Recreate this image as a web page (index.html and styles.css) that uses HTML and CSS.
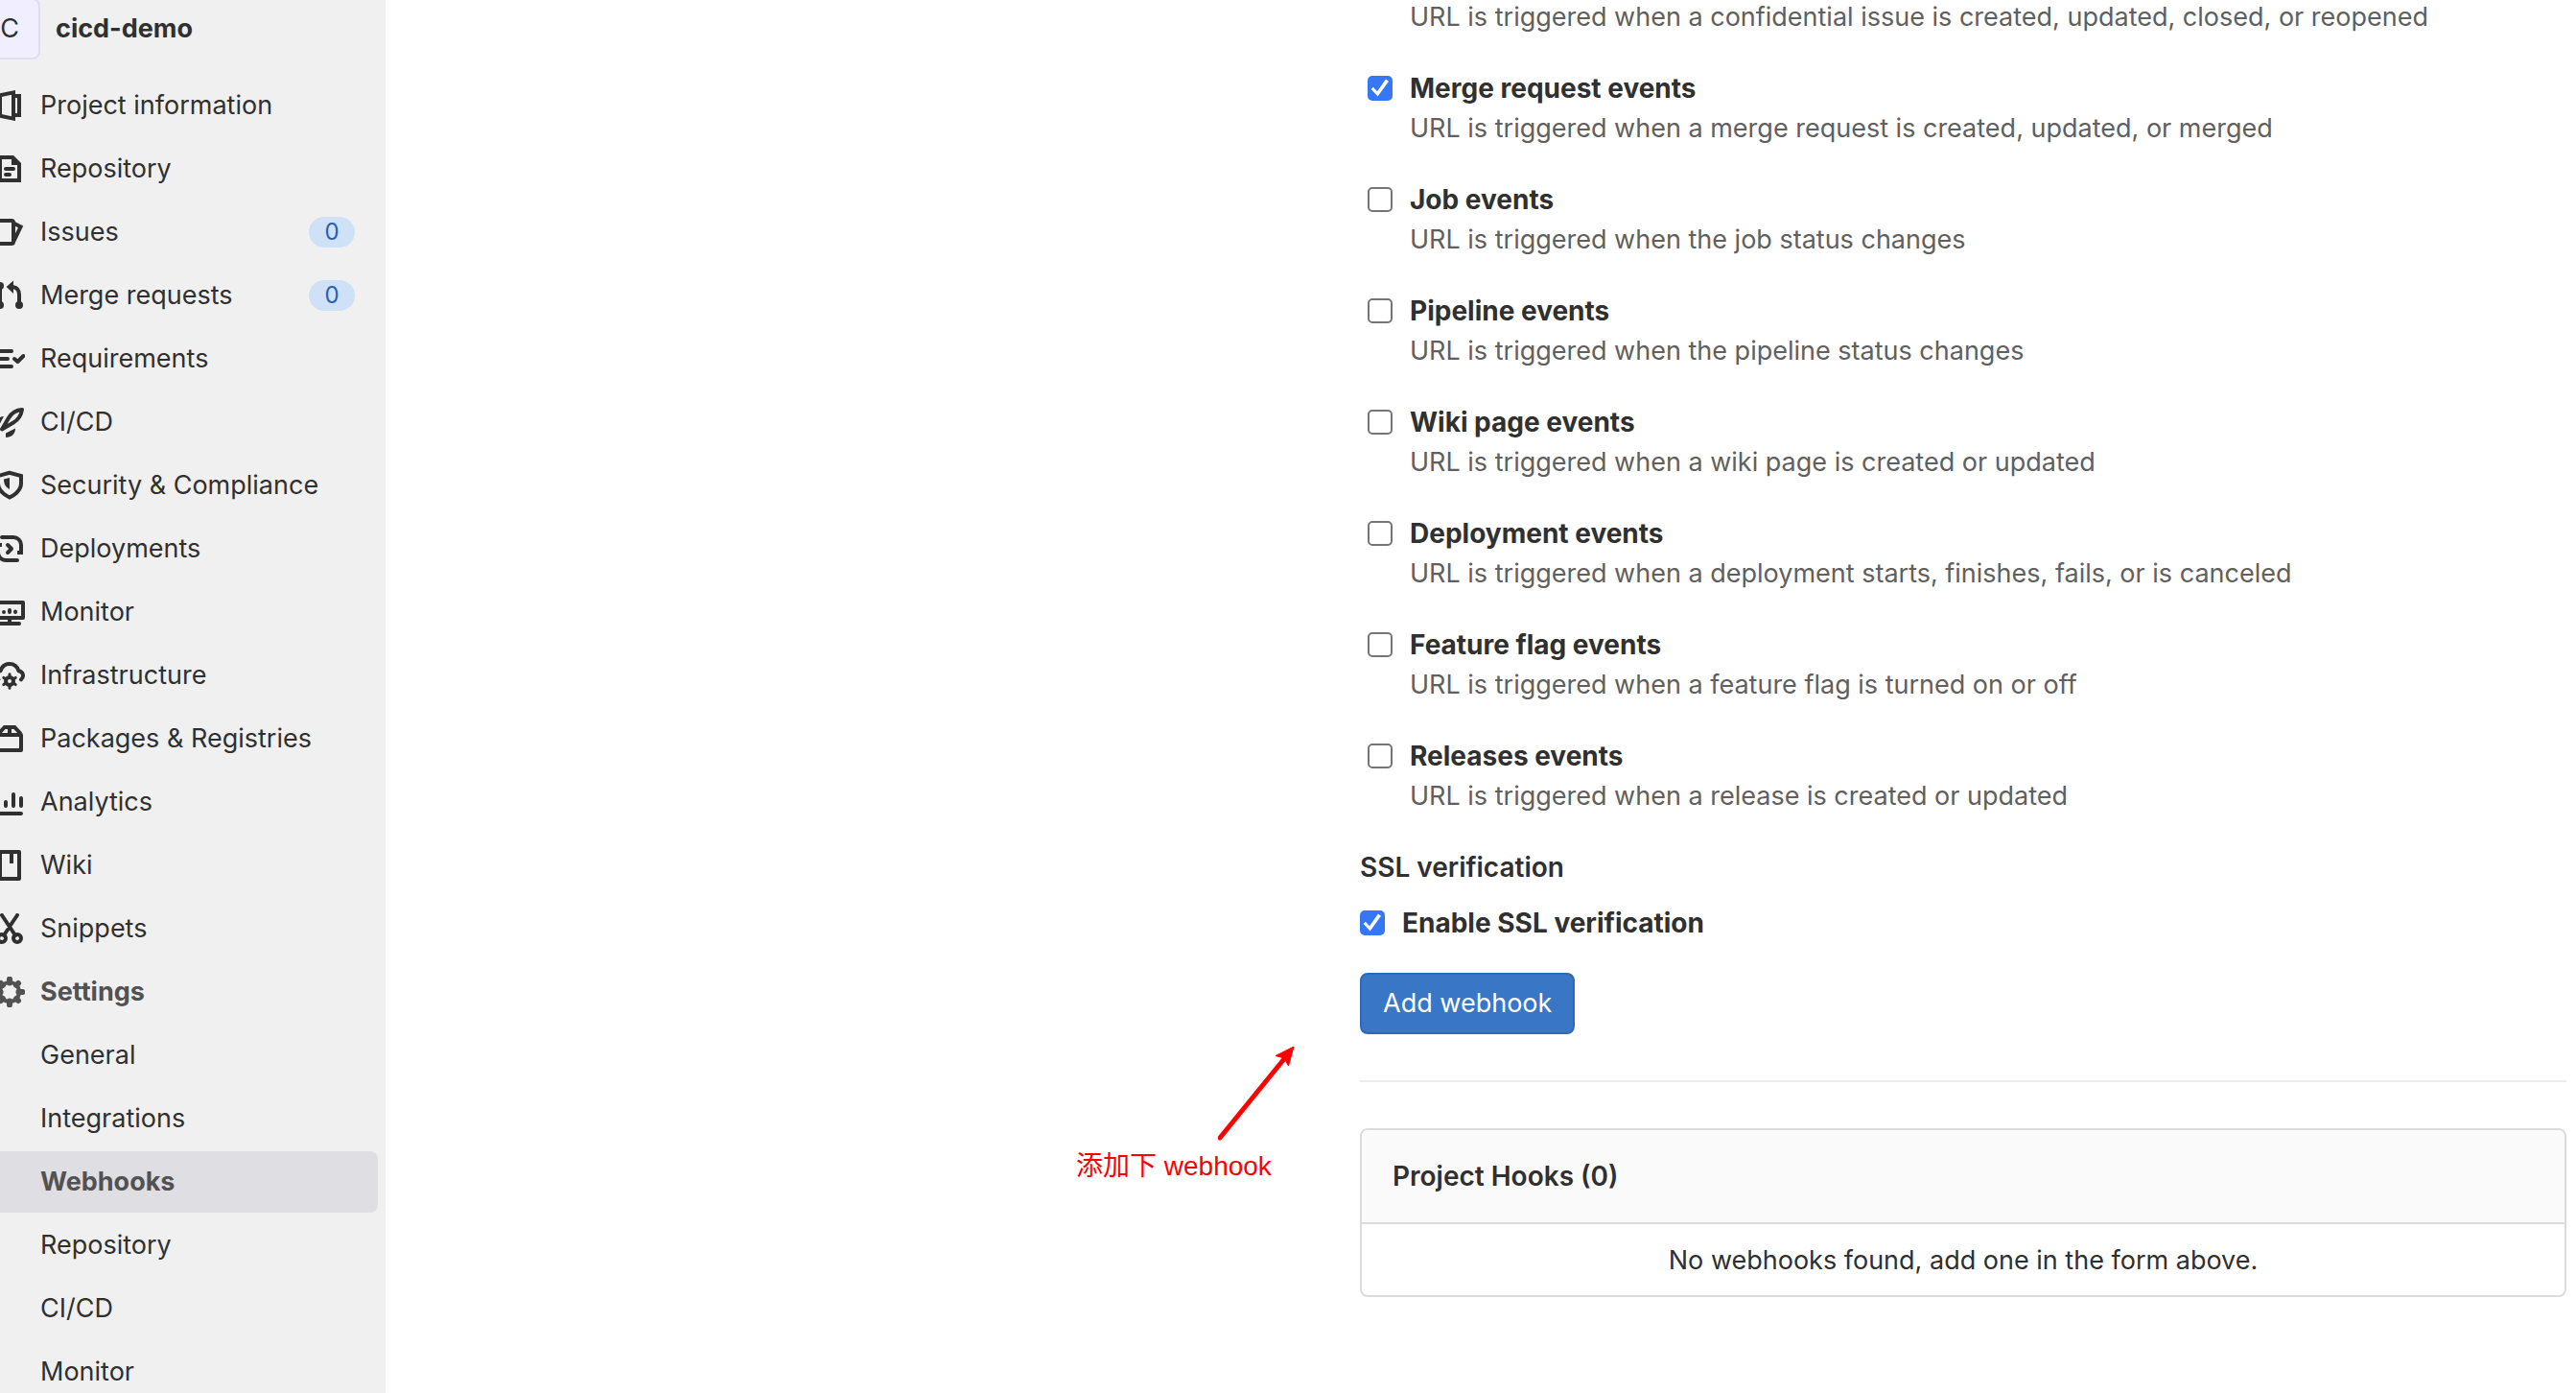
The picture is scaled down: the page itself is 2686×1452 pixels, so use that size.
FILE: index.html
```html
<!DOCTYPE html>
<html lang="en">
<head>
<meta charset="utf-8">
<title>Webhooks · cicd-demo</title>
<link rel="stylesheet" href="styles.css">
</head>
<body>
<div class="page">
  <aside class="sidebar">
    <a class="project" href="#"><span class="avatar">C</span><span class="project-name">cicd-demo</span></a>
    <nav class="nav">
      <a class="nav-item" href="#"><svg class="icon" viewBox="0 0 16 16"><path d="M10 1.2 3 2.6v10.8l7 1.4zM11 3h2v10h-2"/></svg>Project information</a>
      <a class="nav-item" href="#"><svg class="icon" viewBox="0 0 16 16"><path d="M3 2h6.6L13 5.4V14H3z"/><path class="solid" d="M9 1.5h1L13.5 5v1H9z"/><path class="round" d="M6 8h4M6 11h2"/></svg>Repository</a>
      <a class="nav-item" href="#"><svg class="icon" viewBox="0 0 16 16"><path d="M2 2h7a1 1 0 0 1 1 1v10a1 1 0 0 1-1 1H2zM10 3.2l3.8 2L10 13"/></svg>Issues<span class="badge">0</span></a>
      <a class="nav-item" href="#"><svg class="icon" viewBox="0 0 16 16"><path d="M3 3v10M9 3.5C11.6 3.5 13 5.1 13 7.5V13"/><path class="solid" d="M6.3 3.5 10 .2V7z"/><circle class="solid" cx="3" cy="3" r="2"/><circle class="solid" cx="3" cy="13" r="2"/><circle class="solid" cx="13" cy="13" r="2"/></svg>Merge requests<span class="badge">0</span></a>
      <a class="nav-item" href="#"><svg class="icon" viewBox="0 0 16 16"><path class="round" d="M1 4h8M1 8h6M1 12h8M10.5 8l1.700 1.500 3-3"/></svg>Requirements</a>
      <a class="nav-item" href="#"><svg class="icon" viewBox="0 0 16 16"><path class="round" d="M14.5 1.5c-3.2.2-5.5 1.8-7 4.3L4 11.7l6-3.5c2.6-1.5 4-3.6 4.5-6.7z"/><path class="solid" d="M11 11.3c0 3-2 4.7-5 4.7v-2.2zM5 5C2.5 5 .5 7 0 10h2.3z"/></svg>CI/CD</a>
      <a class="nav-item" href="#"><svg class="icon" viewBox="0 0 16 16"><path d="M8 1.4 2 3v4c0 2.7 2 5.2 6 7.3 4-2.1 6-4.6 6-7.3V3z"/><path class="solid" d="M8 4v6C6 9 5 7.5 5 4.8z"/></svg>Security &amp; Compliance</a>
      <a class="nav-item" href="#"><svg class="icon" viewBox="0 0 16 16"><path d="M12 10h2V6a4 4 0 0 0-4-4H4M4 6H2v4a4 4 0 0 0 4 4h6"/><path class="round" d="M4 2h1M11 14h1M7 6l2 2-2 2"/></svg>Deployments</a>
      <a class="nav-item" href="#"><svg class="icon" viewBox="0 0 16 16"><path class="round" d="M1 3h14v8H1zM3 14h10M8 12v2M8 7v1"/><circle class="solid" cx="5" cy="8" r="1"/><path class="round" d="M11 7.8v.2"/></svg>Monitor</a>
      <a class="nav-item" href="#"><svg class="icon" viewBox="0 0 16 16"><path class="round" d="M2.2 10.2C.2 8.5 1 6 3.300 5.600 4 3.400 5.700 2 8 2s4 1.400 4.700 3.600c2.300.4 3.100 2.800 1.300 4.600"/><circle cx="8" cy="11" r="2"/><path class="teeth-small" d="M8 7.4v1M8 13.6v1M4.9 9.2l.8.5M10.3 12.3l.8.5M4.9 12.8l.8-.5M10.3 9.7l.8-.5"/></svg>Infrastructure</a>
      <a class="nav-item" href="#"><svg class="icon" viewBox="0 0 16 16"><path class="round" d="M2 6h12v8H2z"/><path d="M2.200 5.400 5.400 2h5.200l3.200 3.400M8 2v4"/></svg>Packages &amp; Registries</a>
      <a class="nav-item" href="#"><svg class="icon" viewBox="0 0 16 16"><path class="round" d="M2 14h12M2 9.5v.5M6 8v2M10 4v6M14 6v4"/></svg>Analytics</a>
      <a class="nav-item" href="#"><svg class="icon" viewBox="0 0 16 16"><path class="round" d="M3 1h10v14H3z"/><path d="M9 1v6"/></svg>Wiki</a>
      <a class="nav-item" href="#"><svg class="icon" viewBox="0 0 16 16"><path class="round" d="M4 1l7 10.500M12 1 8.600 6M7 8.500 5 11.500"/><circle cx="4" cy="13" r="2"/><circle cx="12" cy="13" r="2"/></svg>Snippets</a>
      <a class="nav-item nav-current" href="#"><svg class="icon" viewBox="0 0 16 16"><circle cx="8" cy="8" r="5"/><path class="teeth" d="M8 1.300v2M8 12.700v2M1.300 8h2M12.700 8h2M3.500 3.500l1 1M11.500 11.500l1 1M3.500 12.500l1-1M11.500 4.500l1-1"/></svg>Settings</a>
      <a class="nav-item nav-sub" href="#">General</a>
      <a class="nav-item nav-sub" href="#">Integrations</a>
      <a class="nav-item nav-sub nav-current nav-active" href="#" aria-current="page">Webhooks</a>
      <a class="nav-item nav-sub" href="#">Repository</a>
      <a class="nav-item nav-sub" href="#">CI/CD</a>
      <a class="nav-item nav-sub" href="#">Monitor</a>
    </nav>
  </aside>

  <main class="main">
    <div class="content">
      <form class="form">
        <div class="event"><p class="event-help">URL is triggered when a confidential issue is created, updated, closed, or reopened</p></div>
        <div class="event"><input class="check" type="checkbox" id="merge" checked><label class="event-label" for="merge">Merge request events</label><p class="event-help">URL is triggered when a merge request is created, updated, or merged</p></div>
        <div class="event"><input class="check" type="checkbox" id="job"><label class="event-label" for="job">Job events</label><p class="event-help">URL is triggered when the job status changes</p></div>
        <div class="event"><input class="check" type="checkbox" id="pipeline"><label class="event-label" for="pipeline">Pipeline events</label><p class="event-help">URL is triggered when the pipeline status changes</p></div>
        <div class="event"><input class="check" type="checkbox" id="wiki"><label class="event-label" for="wiki">Wiki page events</label><p class="event-help">URL is triggered when a wiki page is created or updated</p></div>
        <div class="event"><input class="check" type="checkbox" id="deployment"><label class="event-label" for="deployment">Deployment events</label><p class="event-help">URL is triggered when a deployment starts, finishes, fails, or is canceled</p></div>
        <div class="event"><input class="check" type="checkbox" id="feature"><label class="event-label" for="feature">Feature flag events</label><p class="event-help">URL is triggered when a feature flag is turned on or off</p></div>
        <div class="event"><input class="check" type="checkbox" id="releases"><label class="event-label" for="releases">Releases events</label><p class="event-help">URL is triggered when a release is created or updated</p></div>
        <h2 class="ssl-title">SSL verification</h2>
        <div class="ssl-row"><input class="check" type="checkbox" id="ssl" checked><label class="event-label" for="ssl">Enable SSL verification</label></div>
        <div class="actions">
          <button class="btn" type="button">Add webhook</button>
          <div class="note">
            <svg class="note-arrow" viewBox="0 0 80 100"><path class="note-line" d="M2 96 68 15"/><path class="note-head" d="M79 1 60 10.500 69 13 73.500 21z"/></svg>
            <span class="note-text">添加下 webhook</span>
          </div>
        </div>
      </form>
      <hr class="divider">
      <section class="card">
        <h2 class="card-title">Project Hooks (0)</h2>
        <p class="card-body">No webhooks found, add one in the form above.</p>
      </section>
    </div>
  </main>
</div>
</body>
</html>
```
FILE: styles.css
```css
* {
  box-sizing: border-box;
}

body {
  margin: 0;
  overflow: hidden;
  background: #fff;
  color: #303030;
  font-family: Inter, "Noto Sans CJK SC", sans-serif;
  font-size: 27px;
  line-height: 40px;
}

a {
  color: inherit;
  text-decoration: none;
}

h2,
p {
  margin: 0;
  font-size: inherit;
}

.page {
  display: flex;
  height: 100vh;
}

/* The sidebar is scrolled partly out of view on its left side. */
.sidebar {
  flex: none;
  width: 434px;
  margin-left: -32px;
  padding: 0 8px 0 10px;
  background: #f0f0f0;
}

.project {
  display: flex;
  align-items: center;
  gap: 16px;
  margin: -2px 0 16px;
  font-weight: 700;
}

.avatar {
  width: 64px;
  height: 64px;
  border: 2px solid #dfdcee;
  border-radius: 8px;
  background: #f1efff;
  font-weight: 400;
  line-height: 60px;
  text-align: center;
}

.nav {
  display: flex;
  flex-direction: column;
  gap: 2px;
}

.nav-item {
  display: flex;
  align-items: center;
  gap: 16px;
  height: 64px;
  padding: 0 24px 0 16px;
  border-radius: 8px;
}

.nav-sub {
  padding-left: 64px;
}

.nav-current {
  color: #525252;
  font-weight: 700;
}

.nav-active {
  background: #dfdee3;
}

.icon {
  flex: none;
  width: 32px;
  height: 32px;
  fill: none;
  stroke: currentColor;
  stroke-width: 2;
}

.icon .round {
  stroke-linecap: round;
  stroke-linejoin: round;
}

.icon .solid {
  fill: currentColor;
  stroke: none;
}

.icon .teeth {
  stroke-width: 3;
  stroke-linecap: round;
}

.icon .teeth-small {
  stroke-width: 1.5;
  stroke-linecap: round;
}

.badge {
  width: 48px;
  margin-left: auto;
  border-radius: 16px;
  background: #cfe1f7;
  color: #2a5fae;
  font-size: 24px;
  line-height: 32px;
  text-align: center;
}

.main {
  flex: 1;
  display: grid;
  grid-template-columns: minmax(0, 1016fr) minmax(0, 1258fr);
  align-content: start;
  margin-top: -2px;
  padding-right: 10px;
}

.content {
  grid-column: 2;
}

.event {
  display: grid;
  grid-template-columns: 26px 1fr;
  column-gap: 18px;
  row-gap: 2px;
  align-items: center;
  margin-bottom: 34px;
  padding-left: 8px;
}

.check {
  appearance: none;
  display: grid;
  place-content: center;
  width: 26px;
  height: 26px;
  margin: 0;
  border: 2px solid #767676;
  border-radius: 5px;
  background: #fff;
}

.check:checked {
  border-color: #3478f6;
  background: #3478f6;
}

.check:checked::before {
  content: "";
  width: 20px;
  height: 20px;
  background: #fff;
  clip-path: polygon(3% 55%, 14% 44%, 35% 66%, 80% 3%, 95% 14%, 38% 92%);
}

.event-label {
  font-size: 28px;
  font-weight: 700;
}

.event-help {
  grid-column: 2;
  color: #606060;
}

.ssl-title {
  font-size: 28px;
  font-weight: 600;
}

.ssl-row {
  display: grid;
  grid-template-columns: 26px 1fr;
  column-gap: 18px;
  align-items: center;
  margin: 18px 0 32px;
}

.actions {
  position: relative;
}

.btn {
  display: block;
  height: 64px;
  padding: 0 22px;
  border: 2px solid #2f68b8;
  border-radius: 8px;
  background: #3976c6;
  color: #fff;
  font: inherit;
}

.note {
  position: absolute;
  top: 76px;
  right: calc(100% + 68px);
  width: 228px;
  color: #f00;
}

.note-arrow {
  display: block;
  width: 80px;
  height: 100px;
  margin-left: auto;
}

.note-line {
  fill: none;
  stroke: #f00;
  stroke-width: 5;
  stroke-linecap: round;
}

.note-head {
  fill: #f00;
  stroke: #f00;
}

.note-text {
  display: block;
  margin-top: 6px;
  font-family: "Liberation Sans", "Noto Sans CJK SC", sans-serif;
  font-size: 28px;
  white-space: nowrap;
}

.divider {
  height: 2px;
  margin: 48px 0;
  border: 0;
  background: #ececec;
}

.card {
  overflow: hidden;
  border: 2px solid #dbdbdb;
  border-radius: 8px;
}

.card-title {
  padding: 28px 32px;
  border-bottom: 2px solid #dbdbdb;
  background: #fafafa;
  font-size: 28px;
  font-weight: 600;
}

.card-body {
  padding: 18px 32px 16px;
  text-align: center;
}
```
